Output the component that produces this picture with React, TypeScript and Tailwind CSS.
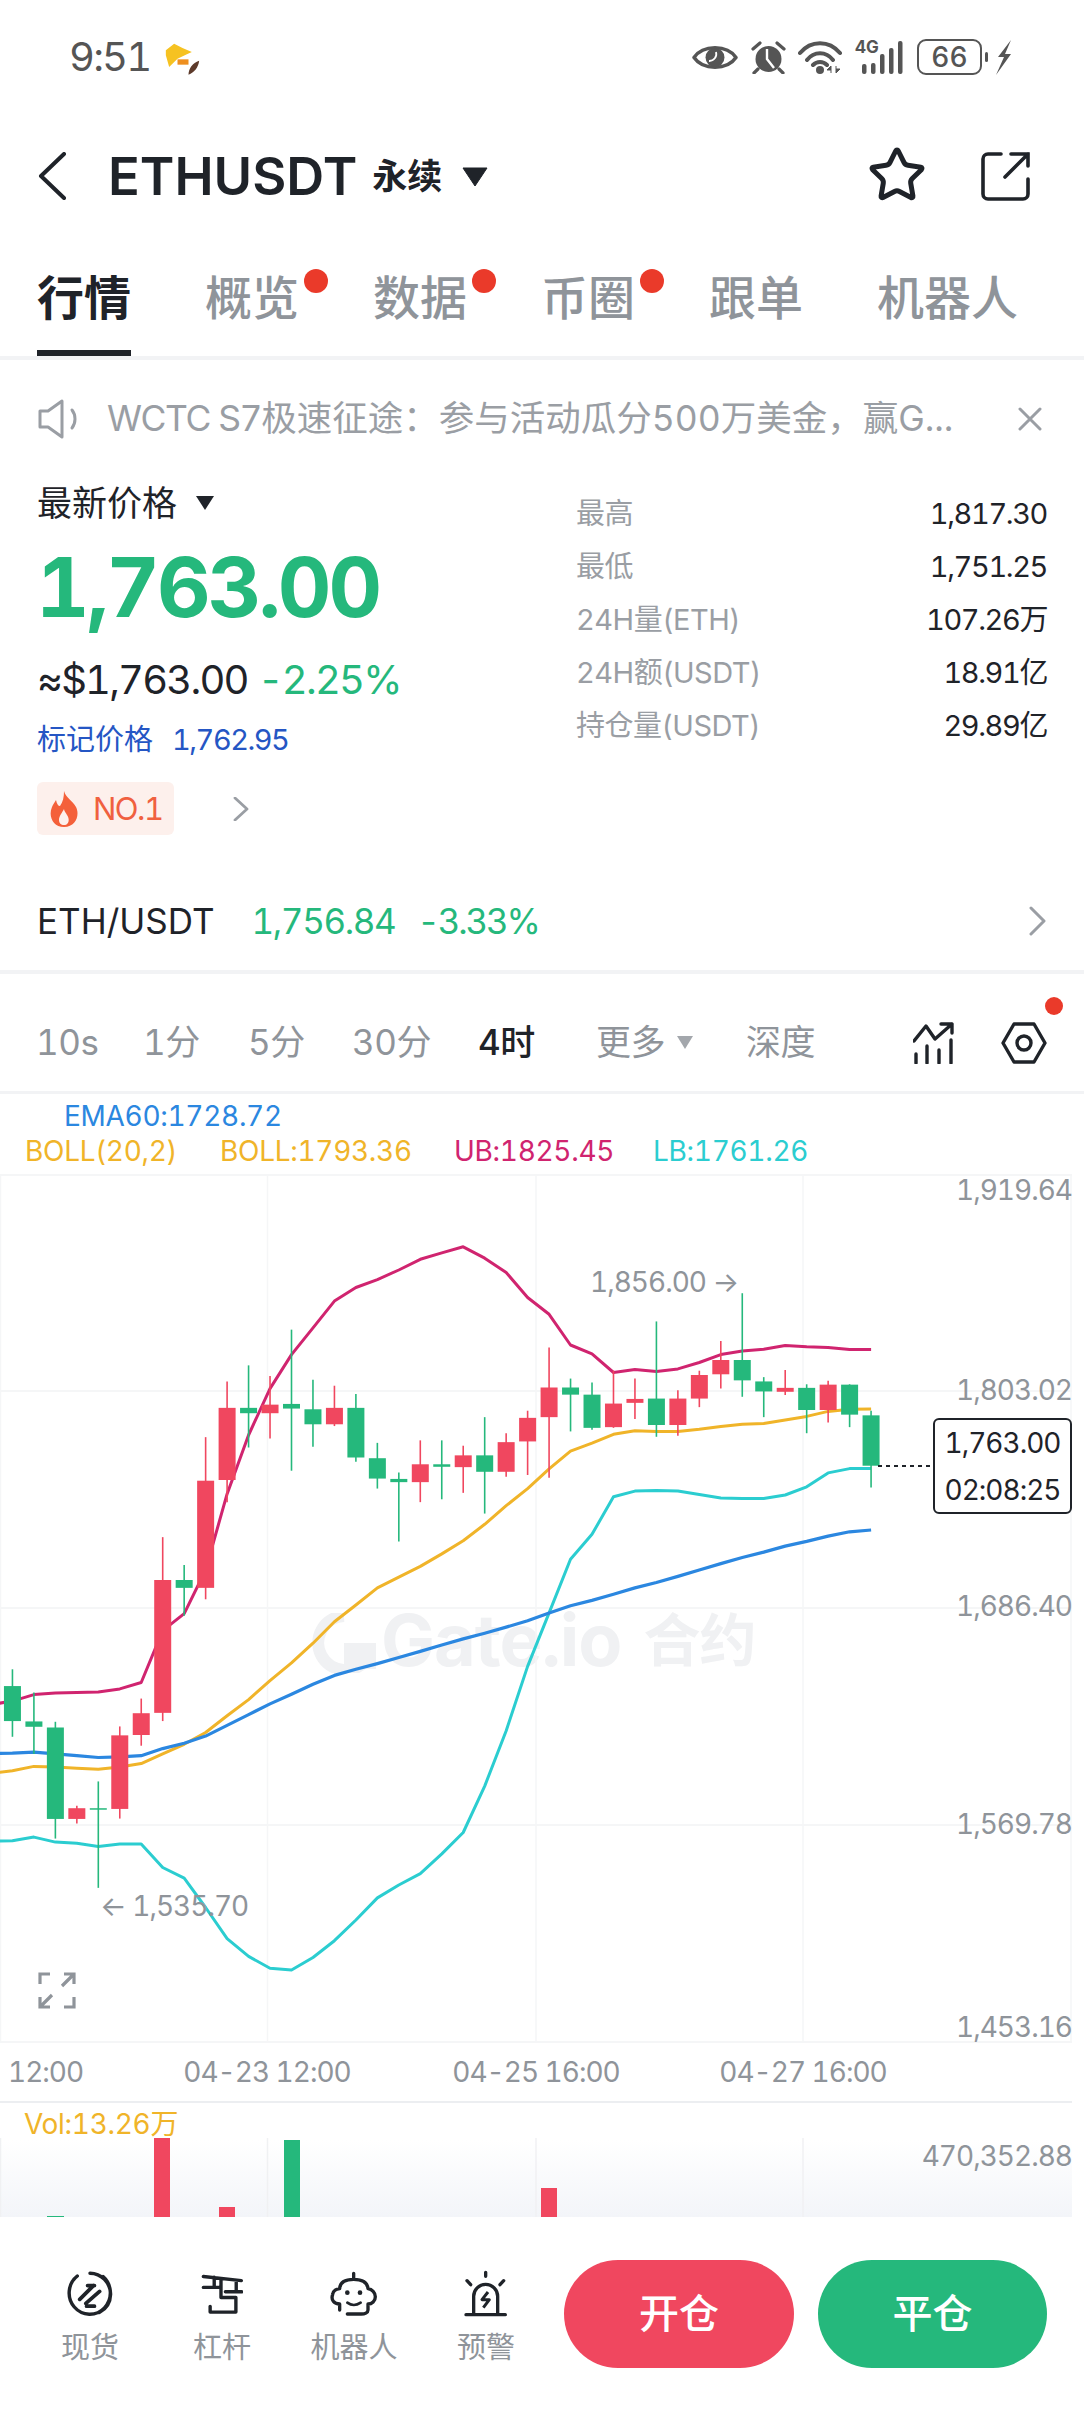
import { Star } from "lucide-react";

const RED = "#f0475f";
const GREEN = "#25b87c";

// chart values were read off the reference: x is candle index, y runs down the chart
const cx = (i: number) => (18 + 31.05 * i) / 1.4465;
const cy = (v: number) => 960 + v / 2.8;

type Candle = [number, number, number, number, "r" | "g"];

const CANDLES: Candle[] = [
  [1986, 2033, 2131, 2175, "g"],
  [2051, 2132, 2147, 2223, "g"],
  [2133, 2149, 2405, 2460, "g"],
  [2368, 2375, 2405, 2418, "r"],
  [2300, 2375, 2378, 2598, "g"],
  [2146, 2171, 2377, 2404, "r"],
  [2068, 2109, 2170, 2200, "r"],
  [1616, 1736, 2108, 2131, "r"],
  [1694, 1736, 1758, 1836, "g"],
  [1336, 1458, 1758, 1790, "r"],
  [1180, 1254, 1456, 1518, "r"],
  [1135, 1254, 1269, 1365, "g"],
  [1165, 1245, 1269, 1340, "r"],
  [1035, 1243, 1256, 1430, "g"],
  [1175, 1258, 1300, 1363, "g"],
  [1192, 1254, 1300, 1305, "r"],
  [1215, 1254, 1393, 1405, "g"],
  [1352, 1395, 1452, 1480, "g"],
  [1435, 1453, 1462, 1628, "g"],
  [1345, 1412, 1462, 1518, "r"],
  [1345, 1412, 1419, 1510, "g"],
  [1360, 1387, 1420, 1492, "r"],
  [1280, 1387, 1433, 1550, "g"],
  [1325, 1350, 1433, 1447, "r"],
  [1262, 1282, 1348, 1442, "r"],
  [1085, 1197, 1280, 1450, "r"],
  [1172, 1197, 1217, 1320, "g"],
  [1183, 1217, 1310, 1315, "g"],
  [1150, 1242, 1308, 1310, "r"],
  [1172, 1229, 1240, 1285, "r"],
  [1012, 1228, 1302, 1335, "g"],
  [1205, 1228, 1302, 1332, "r"],
  [1150, 1162, 1228, 1252, "r"],
  [1067, 1120, 1160, 1200, "r"],
  [933, 1120, 1177, 1223, "g"],
  [1168, 1180, 1208, 1280, "g"],
  [1148, 1198, 1209, 1218, "r"],
  [1188, 1198, 1260, 1325, "g"],
  [1178, 1189, 1260, 1295, "r"],
  [1188, 1189, 1273, 1308, "g"],
  [1262, 1275, 1416, 1477, "g"],
];

// each series starts one candle left of the first, so it runs off the edge
const UB = [2085, 2075, 2057, 2052, 2051, 2050, 2041, 2023, 1878, 1830, 1708, 1495, 1330, 1200, 1105, 1030, 955, 917, 895, 868, 838, 820, 803, 835, 875, 945, 992, 1078, 1103, 1155, 1147, 1152, 1145, 1127, 1105, 1095, 1090, 1079, 1083, 1085, 1091, 1091];
const BOLL = [2277, 2270, 2258, 2260, 2263, 2266, 2260, 2250, 2223, 2196, 2163, 2116, 2071, 2018, 1968, 1913, 1853, 1806, 1758, 1728, 1698, 1663, 1626, 1580, 1528, 1480, 1425, 1375, 1353, 1328, 1318, 1320, 1320, 1314, 1306, 1300, 1298, 1288, 1278, 1264, 1258, 1257];
const EMA = [2222, 2221, 2218, 2223, 2228, 2233, 2231, 2228, 2208, 2193, 2173, 2143, 2113, 2083, 2056, 2028, 2003, 1986, 1970, 1953, 1936, 1918, 1901, 1885, 1868, 1850, 1828, 1808, 1793, 1776, 1758, 1743, 1726, 1708, 1690, 1673, 1658, 1641, 1628, 1613, 1601, 1596];
const LB = [2467, 2466, 2456, 2470, 2473, 2482, 2475, 2475, 2541, 2571, 2653, 2740, 2790, 2823, 2828, 2793, 2746, 2688, 2626, 2590, 2558, 2503, 2443, 2313, 2158, 1978, 1828, 1678, 1608, 1503, 1487, 1485, 1487, 1497, 1506, 1508, 1508, 1498, 1475, 1436, 1424, 1424];

const toPoints = (ys: number[]) =>
  ys.map((y, i) => `${cx(i - 1).toFixed(1)},${cy(y).toFixed(1)}`).join(" ");

const STATS = [
  ["最高", "1,817.30"],
  ["最低", "1,751.25"],
  ["24H量(ETH)", "107.26万"],
  ["24H额(USDT)", "18.91亿"],
  ["持仓量(USDT)", "29.89亿"],
];

function StatusBar() {
  return (
    <div className="flex h-[114px] shrink-0 items-center justify-between pl-[69px] pr-[72px] text-[#555]">
      <div className="flex items-center gap-[14px]">
        <span className="text-[40px] leading-none tracking-[-1.8px]">9:51</span>
        <svg width="37" height="34" viewBox="35 20 110 102" className="mt-[4px]">
          <path d="M40 45 L65 25 L90 38 L118 50 L100 58 L75 70 L50 95 L40 60 Z" fill="#f6c221" />
          <rect x="75" y="72" width="33" height="16" fill="#ee8f1f" />
          <path d="M140 76 C138 95 125 112 108 118 C108 100 120 82 140 76 Z" fill="#5d3a2b" />
        </svg>
      </div>
      <div className="flex items-center">
        <svg width="46" height="27" viewBox="0 0 46 27" className="mr-[13px]">
          <path d="M2 13.5 C11 0.5 35 0.5 44 13.5 C35 26.5 11 26.5 2 13.5 Z" fill="none" stroke="#555" strokeWidth="3.5" strokeLinejoin="round" />
          <circle cx="23" cy="13.5" r="9.5" fill="#555" />
          <path d="M17 17 A7 7 0 0 0 24 8" fill="none" stroke="#fff" strokeWidth="1.8" />
        </svg>
        <svg width="35" height="33" viewBox="0 0 35 33" className="mr-[12px]">
          <circle cx="17.5" cy="18" r="13" fill="#555" />
          <path d="M16 8 V18 L23 27" fill="none" stroke="#fff" strokeWidth="2.4" />
          <path d="M2 8 L9 2 M33 8 L26 2 M7 28 L3 32 M28 28 L32 32" stroke="#555" strokeWidth="3.2" strokeLinecap="round" />
        </svg>
        <svg width="44" height="34" viewBox="0 0 44 34" className="mr-[13px]">
          <path d="M2 13 C13 0 31 0 42 13 M9 20 C16 11 28 11 35 20 M15 25 C19 21 25 21 29 25" fill="none" stroke="#555" strokeWidth="4" strokeLinecap="round" />
          <circle cx="22" cy="30" r="4" fill="#555" />
          <path d="M33 33 V26 L29 30 H33 M38 26 V33 L42 29 H38" fill="#555" stroke="#555" strokeWidth="1" />
        </svg>
        <div className="relative mr-[14px] h-[35px] w-[48px]">
          <span className="absolute left-0 top-[-1px] text-[17px] font-bold leading-none">4G</span>
          <svg width="48" height="35" viewBox="0 0 48 35" className="absolute inset-0">
            <rect x="7" y="24" width="4.5" height="10" rx="2" fill="#555" />
            <rect x="16" y="23" width="4.5" height="11" rx="2" fill="#555" />
            <rect x="25" y="14" width="4.5" height="20" rx="2" fill="#555" />
            <rect x="34" y="8" width="4.5" height="26" rx="2" fill="#555" />
            <rect x="43" y="1" width="4.5" height="33" rx="2" fill="#555" />
          </svg>
        </div>
        <div className="flex h-[36px] w-[65px] items-center justify-center rounded-[9px] border-[2.5px] border-[#555] text-[28px] font-medium leading-none">
          66
        </div>
        <div className="ml-[3px] mr-[8px] h-[10px] w-[3px] rounded-full bg-[#555]" />
        <svg width="16" height="35" viewBox="0 0 16 35">
          <path d="M15 0 L2 17 H8 L0 35 L15 14 H9 Z" fill="#555" />
        </svg>
      </div>
    </div>
  );
}

function Header() {
  return (
    <div className="flex h-[118px] shrink-0 items-center pl-[38px] pr-[53px] pt-[6px] text-[#1f2329]">
      <svg width="30" height="48" viewBox="0 0 30 48">
        <path d="M26 2 L3 24 L26 46" fill="none" stroke="#1f2329" strokeWidth="4" strokeLinecap="round" strokeLinejoin="round" />
      </svg>
      <span className="ml-[40px] text-[52.5px] font-semibold leading-none">ETHUSDT</span>
      <span className="ml-[15px] text-[35px] font-bold leading-none">永续</span>
      <svg width="26" height="20" viewBox="0 0 26 20" className="ml-[20px] mt-[2px]">
        <path d="M1 1 H25 L13 19 Z" fill="#1f2329" stroke="#1f2329" strokeLinejoin="round" />
      </svg>
      <Star size={60} strokeWidth={2} className="ml-auto mr-[54px] -mt-[2px]" />
      <svg width="50" height="50" viewBox="0 0 50 50">
        <path d="M20 3 H7 A5 5 0 0 0 2 8 V43 A5 5 0 0 0 7 48 H42 A5 5 0 0 0 47 43 V28" fill="none" stroke="#1f2329" strokeWidth="3.6" strokeLinecap="round" />
        <path d="M24 26 L47 3 M30 3 H47 V15" fill="none" stroke="#1f2329" strokeWidth="3.6" strokeLinecap="round" />
      </svg>
    </div>
  );
}

function Tab({ label, active, dot }: { label: string; active?: boolean; dot?: boolean }) {
  return (
    <div className={`relative flex h-full items-center pt-[6px] text-[47px] leading-none ${active ? "font-bold text-[#1f2329]" : "font-medium text-[#8f949a]"}`}>
      {label}
      {dot && <span className="absolute right-[-29px] top-[37px] size-[24px] rounded-full bg-[#ea3a2a]" />}
      {active && <span className="absolute inset-x-0 bottom-0 h-[6px] bg-[#1f2329]" />}
    </div>
  );
}

function Tabs() {
  return (
    <div className="h-[128px] shrink-0 border-b-[4px] border-[#f2f3f5] pl-[37px]">
      <div className="flex h-full gap-[74px]">
        <Tab label="行情" active />
        <Tab label="概览" dot />
        <Tab label="数据" dot />
        <Tab label="币圈" dot />
        <Tab label="跟单" />
        <Tab label="机器人" />
      </div>
    </div>
  );
}

function Notice() {
  return (
    <div className="flex h-[114px] shrink-0 items-center pl-[38px] pr-[42px] pt-[4px] text-[#9a9ea4]">
      <svg width="44" height="40" viewBox="0 0 44 40">
        <path d="M2 12 H10 L24 2 V38 L10 28 H2 Z" fill="none" stroke="#9a9ea4" strokeWidth="3" strokeLinejoin="round" />
        <path d="M34 11 C38 16 38 24 34 29" fill="none" stroke="#9a9ea4" strokeWidth="3" strokeLinecap="round" />
      </svg>
      <span className="ml-[25px] whitespace-nowrap text-[35.5px] leading-none">
        <span className="tracking-[-1.4px]">WCTC S7</span>极速征途：参与活动瓜分500万美金，赢G...
      </span>
      <svg width="24" height="24" viewBox="0 0 24 24" className="ml-auto">
        <path d="M2 2 L22 22 M22 2 L2 22" stroke="#9a9ea4" strokeWidth="3" strokeLinecap="round" />
      </svg>
    </div>
  );
}

function Summary() {
  return (
    <div className="flex h-[400px] shrink-0 justify-between pl-[37px] pr-[37px]">
      <div className="flex flex-col">
        <div className="flex h-[58px] items-center text-[35px] text-[#1f2329]">
          最新价格
          <svg width="20" height="16" viewBox="0 0 20 16" className="ml-[18px]">
            <path d="M1 1 H19 L10 15 Z" fill="#1f2329" />
          </svg>
        </div>
        <div className="-ml-[1px] mt-[5px] text-[83px] font-bold leading-[100px] tracking-[-2.9px]" style={{ color: GREEN }}>
          1,763.00
        </div>
        <div className="mt-[18px] flex h-[50px] items-center text-[40px] leading-none tracking-[-1.8px]">
          <span className="text-[#1f2329]">≈$1,763.00</span>
          <span className="ml-[10px]" style={{ color: GREEN }}>-2.25%</span>
        </div>
        <div className="mt-[6px] flex h-[58px] items-center text-[29px] text-[#2556c4]">
          <span>标记价格</span>
          <span className="ml-[19px] tracking-[-1.5px]">1,762.95</span>
        </div>
        <div className="mt-[13px] flex items-center">
          <div className="flex h-[53px] w-[137px] items-center rounded-[6px] bg-[#fdf0ec] pl-[12px] text-[31px] text-[#f0603f]">
            <svg width="30" height="36" viewBox="0 0 30 36">
              <path d="M15 0 C17 7 23 9 27 16 C31 24 27 36 15 36 C4 36 -1 25 3 16 C4 13 6 11 7 9 C8 13 9 15 11 15 C14 11 15 6 15 0 Z M15 34 C20 34 21 28 18 24 C17 22 15 20 15 18 C13 22 10 25 10 29 C10 32 12 34 15 34 Z" fill="#f4603a" fillRule="evenodd" />
            </svg>
            <span className="ml-[14px] leading-none tracking-[-1.5px]">NO.1</span>
          </div>
          <svg width="16" height="24" viewBox="0 0 16 24" className="ml-[59px]">
            <path d="M2 1 L14 12 L2 23" fill="none" stroke="#9a9ea4" strokeWidth="2.8" strokeLinecap="round" strokeLinejoin="round" />
          </svg>
        </div>
      </div>
      <div className="mt-[13px] flex w-[471px] flex-col text-[29px] leading-none">
        {STATS.map(([label, value]) => (
          <div key={label} className="flex h-[53px] items-center justify-between">
            <span className="tracking-[-0.5px] text-[#9a9ea4]">{label}</span>
            <span className="tracking-[-1.4px] text-[#1f2329]">{value}</span>
          </div>
        ))}
      </div>
    </div>
  );
}

function SpotRow() {
  return (
    <div className="flex h-[100px] shrink-0 items-center border-b-[4px] border-[#f2f3f5] pl-[37px] pr-[37px] pb-[2px] text-[35px] leading-none">
      <span className="text-[#1f2329]">ETH/USDT</span>
      <span className="ml-[37px] tracking-[-1.4px]" style={{ color: GREEN }}>1,756.84</span>
      <span className="ml-[22px] tracking-[-2.2px]" style={{ color: GREEN }}>-3.33%</span>
      <svg width="18" height="30" viewBox="0 0 18 30" className="ml-auto">
        <path d="M2 2 L15 15 L2 28" fill="none" stroke="#9a9ea4" strokeWidth="3" strokeLinecap="round" strokeLinejoin="round" />
      </svg>
    </div>
  );
}

function Timeframes() {
  return (
    <div className="relative flex h-[120px] shrink-0 items-center border-b-[3px] border-[#f2f3f5] pl-[36px] pr-[37px] pt-[20px] text-[35px] leading-none tracking-[-0.5px] text-[#8f949a]">
      <span className="w-[107px]">10s</span>
      <span className="w-[105px]">1分</span>
      <span className="w-[104px]">5分</span>
      <span className="w-[126px]">30分</span>
      <span className="w-[118px] font-medium text-[#1f2329]">4时</span>
      <span>更多</span>
      <svg width="18" height="15" viewBox="0 0 18 15" className="ml-[11px] mr-[52px]">
        <path d="M1 1 H17 L9 14 Z" fill="#a3a7ac" />
      </svg>
      <span>深度</span>
      <svg width="42" height="42" viewBox="0 0 42 42" className="ml-auto mr-[46px]">
        <path d="M1 19 L13 4 L22 17 L39 2 M28 2 H39 V11" fill="none" stroke="#1f2329" strokeWidth="3.4" strokeLinecap="round" strokeLinejoin="round" />
        <path d="M3 32 V41 M14 24 V41 M26 28 V41 M38 18 V41" stroke="#1f2329" strokeWidth="3.4" strokeLinecap="round" />
      </svg>
      <svg width="46" height="42" viewBox="0 0 46 42">
        <path d="M13 2 H33 L44 21 L33 40 H13 L2 21 Z" fill="none" stroke="#1f2329" strokeWidth="3.4" strokeLinejoin="round" />
        <circle cx="23" cy="21" r="7" fill="none" stroke="#1f2329" strokeWidth="3.4" />
      </svg>
      <span className="absolute right-[21px] top-[23px] size-[18px] rounded-full bg-[#ea3a2a]" />
    </div>
  );
}

function Legend() {
  return (
    <div className="h-[80px] shrink-0 text-[28px] leading-[35px] tracking-[-0.3px]">
      <div className="pl-[64px] pt-[5px] text-[#2b87e0]">EMA60:1728.72</div>
      <div className="flex pl-[25px]">
        <span className="w-[195px] text-[#f0b429]">BOLL(20,2)</span>
        <span className="w-[234px] text-[#f0b429]">BOLL:1793.36</span>
        <span className="w-[199px] text-[#d0246f]">UB:1825.45</span>
        <span className="text-[#2bcdd0]">LB:1761.26</span>
      </div>
    </div>
  );
}

function Chart() {
  return (
    <div className="relative h-[927px] shrink-0 overflow-hidden text-[28px] leading-none tracking-[-1px] text-[#8f949a]">
      <div className="absolute left-[311px] top-[430px] flex items-center text-[#f0f1f3]">
        <svg width="66" height="60" viewBox="0 0 66 60" className="mt-[6px]">
          <path d="M56 46 A27 27 0 1 1 33 3" fill="none" stroke="#f0f1f3" strokeWidth="12" />
          <rect x="33" y="30" width="32" height="26" fill="#f0f1f3" />
        </svg>
        <span className="ml-[4px] text-[72px] font-bold">Gate.io</span>
        <span className="ml-[22px] text-[57px] font-bold">合约</span>
      </div>
      <svg width="1084" height="927" viewBox="0 1174 1084 927" className="absolute inset-0">
        {[1175, 1391, 1608, 1825, 2042].map((y) => (
          <line key={y} x1="0" x2="1072" y1={y} y2={y} stroke="#f2f3f5" strokeWidth="1.5" />
        ))}
        {[0.5, 267.5, 536, 803, 1071].map((x) => (
          <line key={x} x1={x} x2={x} y1="1175" y2="2042" stroke="#f5f6f7" strokeWidth="1.5" />
        ))}
        <polyline points={toPoints(UB)} fill="none" stroke="#d0246f" strokeWidth="3" strokeLinejoin="round" />
        <polyline points={toPoints(LB)} fill="none" stroke="#2bcdd0" strokeWidth="3" strokeLinejoin="round" />
        <polyline points={toPoints(BOLL)} fill="none" stroke="#f0b429" strokeWidth="3" strokeLinejoin="round" />
        <polyline points={toPoints(EMA)} fill="none" stroke="#2b87e0" strokeWidth="3.2" strokeLinejoin="round" />
        {CANDLES.map(([hi, top, bot, lo, side], i) => {
          const color = side === "r" ? RED : GREEN;
          return (
            <g key={i}>
              <line x1={cx(i)} x2={cx(i)} y1={cy(hi)} y2={cy(lo)} stroke={color} strokeWidth="1.6" />
              <rect x={cx(i) - 8.5} y={cy(top)} width="17" height={Math.max(cy(bot) - cy(top), 1.5)} fill={color} />
            </g>
          );
        })}
        <line x1="878" x2="933" y1="1466" y2="1466" stroke="#1f2329" strokeWidth="2" strokeDasharray="4 4" />
      </svg>
      <span className="absolute left-[590px] top-[108px] -translate-y-1/2">1,856.00 →</span>
      <span className="absolute left-[100px] top-[732px] -translate-y-1/2">← 1,535.70</span>
      <span className="absolute right-[12px] top-[16px] -translate-y-1/2">1,919.64</span>
      <span className="absolute right-[12px] top-[216px] -translate-y-1/2">1,803.02</span>
      <span className="absolute right-[12px] top-[432px] -translate-y-1/2">1,686.40</span>
      <span className="absolute right-[12px] top-[650px] -translate-y-1/2">1,569.78</span>
      <span className="absolute right-[12px] top-[853px] -translate-y-1/2">1,453.16</span>
      <div className="absolute left-[933px] top-[244px] flex h-[96px] w-[139px] flex-col items-center justify-center gap-[19px] rounded-[6px] border-2 border-[#1f2329] bg-white text-[#1f2329]">
        <span>1,763.00</span>
        <span>02:08:25</span>
      </div>
      <svg width="38" height="37" viewBox="0 0 38 37" className="absolute left-[38px] top-[798px]">
        <path d="M2 12 V2 H12 M26 2 H36 V12 M2 25 V35 H12 M36 25 V35 H26 M24 14 L35 3 M3 34 L14 23" fill="none" stroke="#8f949a" strokeWidth="3.2" />
      </svg>
      <span className="absolute left-[8px] top-[898px] -translate-y-1/2">12:00</span>
      <span className="absolute left-[267px] top-[898px] -translate-x-1/2 -translate-y-1/2">04-23 12:00</span>
      <span className="absolute left-[536px] top-[898px] -translate-x-1/2 -translate-y-1/2">04-25 16:00</span>
      <span className="absolute left-[803px] top-[898px] -translate-x-1/2 -translate-y-1/2">04-27 16:00</span>
    </div>
  );
}

function Volume() {
  return (
    <div className="relative h-[116px] w-[1072px] shrink-0 border-t-2 border-[#eceef1]">
      <div className="pl-[24px] pt-[5px] text-[28px] leading-[32px] tracking-[-0.3px] text-[#f0b429]">Vol:13.26万</div>
      <div className="absolute inset-x-0 bottom-0 top-[37px] bg-linear-to-b from-white to-[#f3f5f9]" />
      <svg width="1072" height="79" viewBox="0 2138 1072 79" className="absolute bottom-0 left-0">
        {[0.5, 267.5, 536, 803].map((x) => (
          <line key={x} x1={x} x2={x} y1="2138" y2="2217" stroke="#f0f1f3" strokeWidth="1.5" />
        ))}
        <rect x="47" y="2216" width="17" height="1" fill={GREEN} />
        <rect x="154" y="2138" width="16" height="79" fill={RED} />
        <rect x="219" y="2207" width="16" height="10" fill={RED} />
        <rect x="284" y="2140" width="16" height="77" fill={GREEN} />
        <rect x="541" y="2188" width="16" height="29" fill={RED} />
      </svg>
      <span className="absolute right-0 top-[37px] text-[28px] leading-[32px] tracking-[-1px] text-[#8f949a]">470,352.88</span>
    </div>
  );
}

function NavItem({ label, children }: { label: string; children: React.ReactNode }) {
  return (
    <div className="flex w-[132px] flex-col items-center">
      <div className="flex h-[48px] items-center">{children}</div>
      <span className="mt-[15px] text-[29px] leading-none text-[#8f949a]">{label}</span>
    </div>
  );
}

function BottomNav() {
  return (
    <div className="flex flex-1 items-start bg-white pl-[24px] pr-[37px] pt-[43px]">
      <div className="flex pt-[10px]">
        <NavItem label="现货">
          <svg width="46" height="48" viewBox="195 433 134 139">
            <path d="M300 452 A60 62 0 1 1 225 450 M262 442 A60 62 0 0 1 322 503 A60 62 0 0 1 290 556" fill="none" stroke="#1f2329" strokeWidth="10" strokeLinecap="round" />
            <path d="M232 518 L272 478 M255 478 H275 M250 530 L290 495 M252 538 H275" fill="none" stroke="#1f2329" strokeWidth="11" strokeLinecap="round" />
          </svg>
        </NavItem>
        <NavItem label="杠杆">
          <svg width="42" height="43" viewBox="583 442 124 122">
            <path d="M590 450 L702 462 M590 482 H637 M622 452 V482 M655 495 H703 M687 462 V495 M642 458 V512 H686 V555 H610 V538" fill="none" stroke="#1f2329" strokeWidth="10" strokeLinecap="round" strokeLinejoin="round" />
          </svg>
        </NavItem>
        <NavItem label="机器人">
          <svg width="48" height="46" viewBox="956 438 144 132">
            <path d="M1027 442 V458 M985 552 V534 C968 534 958 522 964 505 C966 492 975 490 985 488 C986 468 1000 460 1027 460 C1054 460 1068 468 1070 488 C1082 490 1092 500 1092 512 C1092 525 1082 534 1070 534 V552 C1070 560 1060 564 1050 564 H1008" fill="none" stroke="#1f2329" strokeWidth="10" strokeLinecap="round" strokeLinejoin="round" />
            <circle cx="1008" cy="500" r="7" fill="#1f2329" />
            <circle cx="1046" cy="500" r="7" fill="#1f2329" />
            <path d="M1008 530 Q1027 544 1048 530" fill="none" stroke="#1f2329" strokeWidth="8" strokeLinecap="round" />
          </svg>
        </NavItem>
        <NavItem label="预警">
          <svg width="44" height="48" viewBox="1346 433 132 140">
            <path d="M1352 565 H1470 M1375 560 V510 A36 36 0 0 1 1447 510 V560 M1411 438 V450 M1355 463 L1366 475 M1465 463 L1454 475" fill="none" stroke="#1f2329" strokeWidth="10" strokeLinecap="round" />
            <path d="M1418 497 L1400 520 H1422 L1404 544" fill="none" stroke="#1f2329" strokeWidth="9" strokeLinejoin="round" />
          </svg>
        </NavItem>
      </div>
      <div className="ml-[12px] flex h-[108px] w-[230px] items-center justify-center rounded-[54px] text-[40px] font-medium text-white" style={{ backgroundColor: RED }}>
        开仓
      </div>
      <div className="ml-[24px] flex h-[108px] w-[229px] items-center justify-center rounded-[54px] text-[40px] font-medium text-white" style={{ backgroundColor: GREEN }}>
        平仓
      </div>
    </div>
  );
}

export default function App() {
  return (
    <div className="flex h-[2412px] w-[1084px] flex-col overflow-hidden bg-white tabular-nums [font-family:Inter,'Noto_Sans_CJK_SC',sans-serif]">
      <StatusBar />
      <Header />
      <Tabs />
      <Notice />
      <Summary />
      <SpotRow />
      <Timeframes />
      <Legend />
      <Chart />
      <Volume />
      <BottomNav />
    </div>
  );
}
